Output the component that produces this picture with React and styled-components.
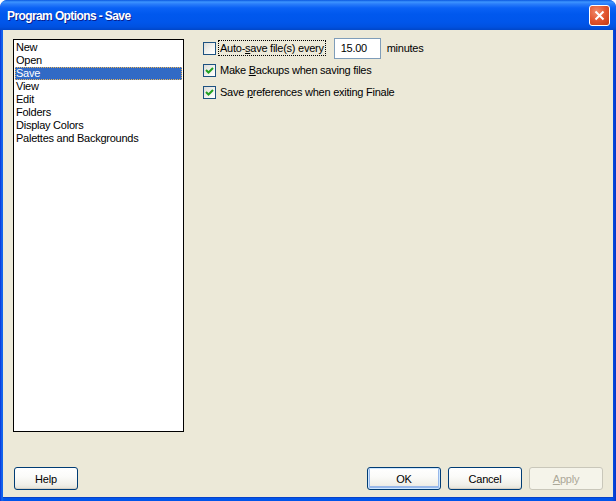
import React, { useState } from "react";
import styled, { createGlobalStyle } from "styled-components";

const GlobalStyle = createGlobalStyle`
  html, body {
    margin: 0;
    padding: 0;
    background: #ffffff;
  }
  * {
    box-sizing: border-box;
  }
`;

const Window = styled.div`
  width: 616px;
  height: 501px;
  display: flex;
  flex-direction: column;
  background: linear-gradient(to right, #0831d9 0px, #166aee 2px, #0055ea 4px, #0055ea 612px, #0834c8 616px);
  border-radius: 7px 7px 0 0;
  overflow: hidden;
  font-family: "Liberation Sans", Arial, sans-serif;
  font-size: 11px;
  letter-spacing: -0.25px;
  color: #000;
`;

const TitleBar = styled.div`
  height: 30px;
  flex: 0 0 30px;
  display: flex;
  align-items: center;
  justify-content: space-between;
  padding: 0 6px 0 7px;
  background: linear-gradient(
    to bottom,
    #0a57e0 0px,
    #3d95ff 2px,
    #2a7dfa 4px,
    #0a61f5 8px,
    #0058ee 14px,
    #0056eb 22px,
    #0051e0 27px,
    #0046c8 30px
  );
  border-radius: 7px 7px 0 0;
`;

const Title = styled.span`
  color: #ffffff;
  font-weight: bold;
  font-size: 12px;
  letter-spacing: -0.6px;
  text-shadow: 1px 1px 0 #0a1e8c;
  padding-top: 1px;
`;

const CloseButton = styled.div`
  width: 21px;
  height: 21px;
  border: 1px solid #ffffff;
  border-radius: 3px;
  background: radial-gradient(circle at 35% 30%, #f08a6b 0%, #e2552f 50%, #c23a14 100%);
  display: flex;
  align-items: center;
  justify-content: center;
  margin-top: 1px;
`;

const Body = styled.div`
  flex: 1;
  margin: 0 3px 3px 3px;
  background: #ece9d8;
  display: flex;
  flex-direction: column;
  padding: 9px 10px 7px 10px;
  border-bottom: 1px solid #0842c8;
`;

const Content = styled.div`
  display: grid;
  grid-template-columns: 171px 1fr;
  column-gap: 19px;
  height: 393px;
`;

const ListBox = styled.div`
  border: 1px solid #000000;
  background: #ffffff;
  padding: 1px 1px 0 1px;
`;

const ListItem = styled.div`
  height: 13px;
  line-height: 13px;
  padding-left: 1px;
  white-space: nowrap;
  background: ${(props) => (props.selected ? "#316ac5" : "transparent")};
  color: ${(props) => (props.selected ? "#ffffff" : "#000000")};
  outline: ${(props) => (props.selected ? "1px dotted #e6b45a" : "none")};
  outline-offset: -1px;
`;

const Options = styled.div`
  display: flex;
  flex-direction: column;
  margin-top: -2px;
`;

const OptionRow = styled.div`
  height: 22px;
  display: flex;
  align-items: center;
`;

const Box = styled.span`
  width: 13px;
  height: 13px;
  flex: 0 0 13px;
  border: 1px solid #1c5180;
  background: linear-gradient(135deg, #dcdcd7 0%, #f4f4f1 60%, #ffffff 100%);
  display: flex;
  align-items: center;
  justify-content: center;
`;

const Label = styled.span`
  margin-left: 3px;
  padding: 1px 1px;
  outline: ${(props) => (props.focused ? "1px dotted #000" : "none")};
  white-space: nowrap;
`;

const Key = styled.span`
  text-decoration: underline;
`;

const NumberField = styled.input`
  width: 47px;
  height: 21px;
  margin-left: 9px;
  border: 1px solid #7f9db9;
  background: #ffffff;
  font-family: "Liberation Sans", Arial, sans-serif;
  font-size: 11px;
  letter-spacing: -0.25px;
  padding: 0 0 0 6px;
  outline: none;
  color: #000;
`;

const Unit = styled.span`
  margin-left: 6px;
`;

const Footer = styled.div`
  margin-top: auto;
  display: flex;
  align-items: center;
  gap: 7px;
  padding-left: 1px;
`;

const Spacer = styled.div`
  flex: 1;
`;

const Button = styled.button`
  width: ${(props) => props.w || 74}px;
  height: 23px;
  border-radius: 3px;
  font-family: "Liberation Sans", Arial, sans-serif;
  font-size: 11px;
  letter-spacing: -0.2px;
  padding: 0;
  border: 1px solid ${(props) => (props.disabled ? "#c9c7ba" : "#003c74")};
  color: ${(props) => (props.disabled ? "#aca899" : "#000")};
  background: ${(props) =>
    props.disabled
      ? "#f5f4ea"
      : "linear-gradient(to bottom, #ffffff 0%, #fbfbf9 40%, #f0efe9 80%, #e3e1d7 100%)"};
  box-shadow: ${(props) =>
    props.primary
      ? "inset 0 0 0 1px #cee7ff, inset 0 -1px 0 2px #98b8ea"
      : props.disabled
      ? "none"
      : "inset 0 -1px 0 0 #d6d0c5"};
`;

function Check({ checked }) {
  return (
    <Box>
      {checked && (
        <svg width="9" height="9" viewBox="0 0 9 9">
          <path d="M1 4 L3.5 6.5 L8 2" stroke="#21a121" strokeWidth="2" fill="none" />
        </svg>
      )}
    </Box>
  );
}

const pages = [
  "New",
  "Open",
  "Save",
  "View",
  "Edit",
  "Folders",
  "Display Colors",
  "Palettes and Backgrounds",
];

function App() {
  const [page, setPage] = useState("Save");
  const [minutes, setMinutes] = useState("15.00");
  return (
    <>
      <GlobalStyle />
      <Window>
        <TitleBar>
          <Title>Program Options - Save</Title>
          <CloseButton>
            <svg width="11" height="11" viewBox="0 0 11 11">
              <path d="M1.5 1.5 L9.5 9.5 M9.5 1.5 L1.5 9.5" stroke="#ffffff" strokeWidth="2" />
            </svg>
          </CloseButton>
        </TitleBar>
        <Body>
          <Content>
            <ListBox>
              {pages.map((p) => (
                <ListItem key={p} selected={p === page} onClick={() => setPage(p)}>
                  {p}
                </ListItem>
              ))}
            </ListBox>
            <Options>
              <OptionRow>
                <Check checked={false} />
                <Label focused>
                  Auto-<Key>s</Key>ave file(s) every
                </Label>
                <NumberField value={minutes} onChange={(e) => setMinutes(e.target.value)} />
                <Unit>minutes</Unit>
              </OptionRow>
              <OptionRow>
                <Check checked />
                <Label>
                  Make <Key>B</Key>ackups when saving files
                </Label>
              </OptionRow>
              <OptionRow>
                <Check checked />
                <Label>
                  Save <Key>p</Key>references when exiting Finale
                </Label>
              </OptionRow>
            </Options>
          </Content>
          <Footer>
            <Button w={64}>Help</Button>
            <Spacer />
            <Button primary>OK</Button>
            <Button>Cancel</Button>
            <Button disabled>
              <Key>A</Key>pply
            </Button>
          </Footer>
        </Body>
      </Window>
    </>
  );
}

export default App;
